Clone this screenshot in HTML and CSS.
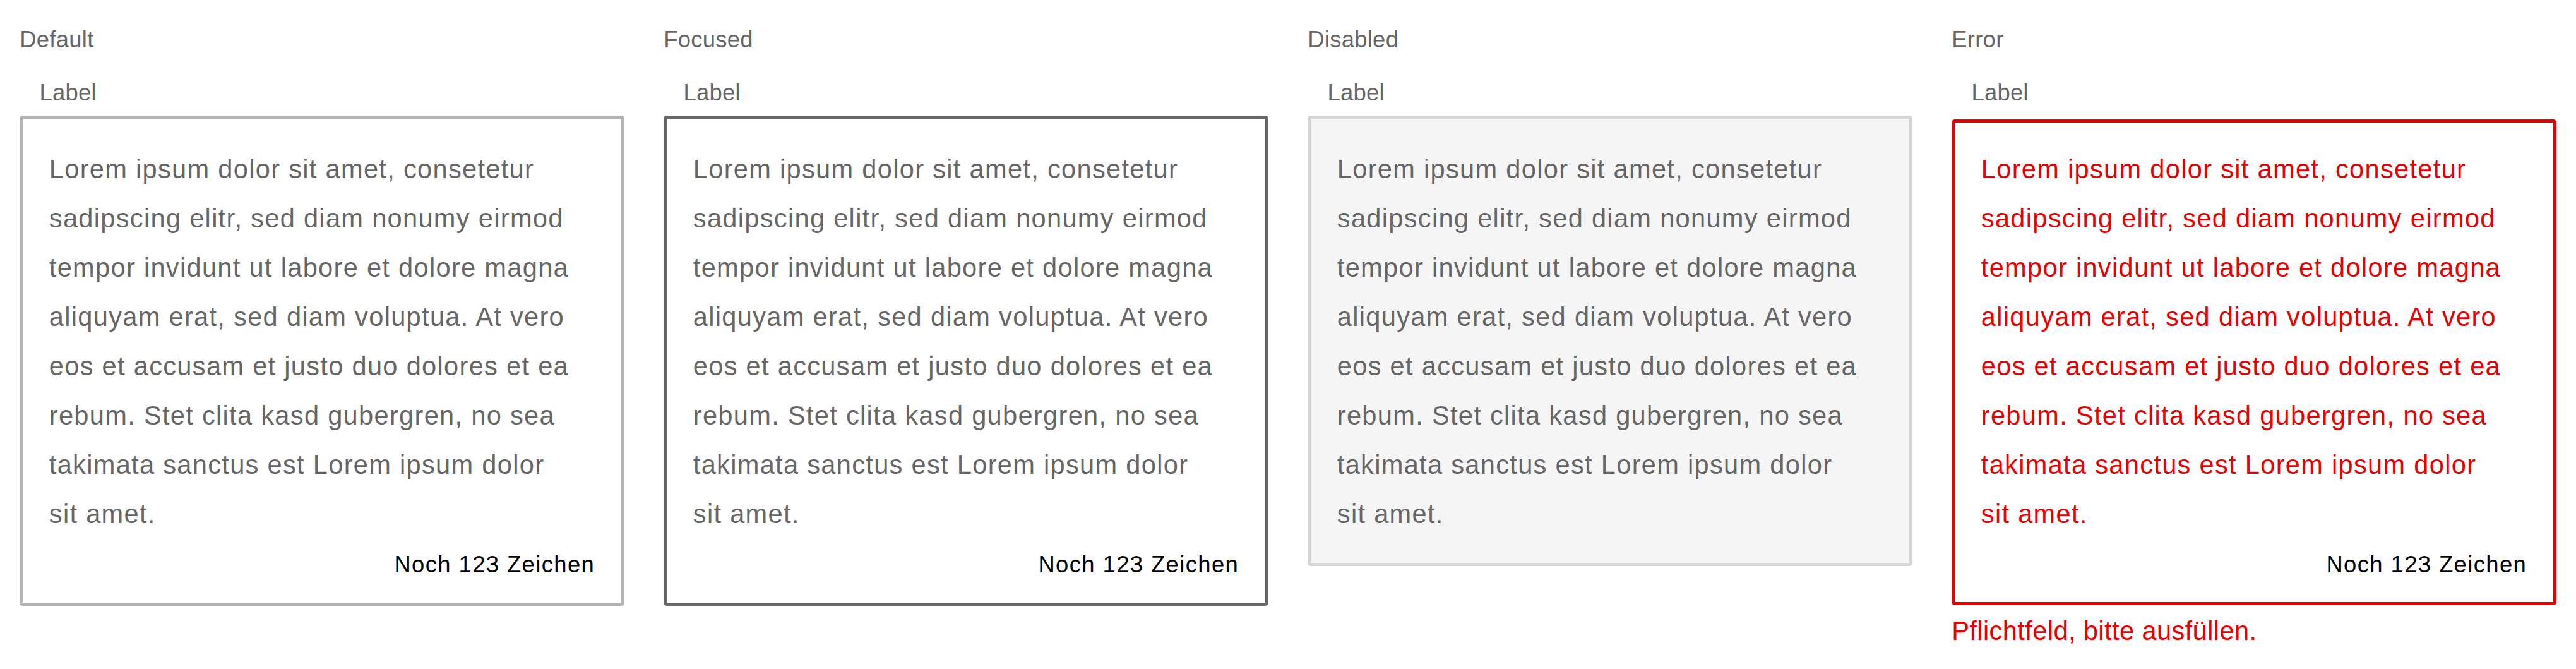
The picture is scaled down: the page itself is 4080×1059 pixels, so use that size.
FILE: index.html
```html
<!DOCTYPE html>
<html lang="de">
<head>
<meta charset="utf-8">
<title>Textarea states</title>
<link rel="stylesheet" href="styles.css">
</head>
<body>
<main class="states">
  <section class="state">
    <h2 class="state-title">Default</h2>
    <div class="field">
      <div class="field-label">Label</div>
      <div class="field-box">
        <p class="field-text">Lorem ipsum dolor sit amet, consetetur<br>sadipscing elitr, sed diam nonumy eirmod<br>tempor invidunt ut labore et dolore magna<br>aliquyam erat, sed diam voluptua. At vero<br>eos et accusam et justo duo dolores et ea<br>rebum. Stet clita kasd gubergren, no sea<br>takimata sanctus est Lorem ipsum dolor<br>sit amet.</p>
        <div class="field-counter">Noch 123 Zeichen</div>
      </div>
    </div>
  </section>
  <section class="state">
    <h2 class="state-title">Focused</h2>
    <div class="field">
      <div class="field-label">Label</div>
      <div class="field-box field-box--focused">
        <p class="field-text">Lorem ipsum dolor sit amet, consetetur<br>sadipscing elitr, sed diam nonumy eirmod<br>tempor invidunt ut labore et dolore magna<br>aliquyam erat, sed diam voluptua. At vero<br>eos et accusam et justo duo dolores et ea<br>rebum. Stet clita kasd gubergren, no sea<br>takimata sanctus est Lorem ipsum dolor<br>sit amet.</p>
        <div class="field-counter">Noch 123 Zeichen</div>
      </div>
    </div>
  </section>
  <section class="state">
    <h2 class="state-title">Disabled</h2>
    <div class="field">
      <div class="field-label">Label</div>
      <div class="field-box field-box--disabled">
        <p class="field-text">Lorem ipsum dolor sit amet, consetetur<br>sadipscing elitr, sed diam nonumy eirmod<br>tempor invidunt ut labore et dolore magna<br>aliquyam erat, sed diam voluptua. At vero<br>eos et accusam et justo duo dolores et ea<br>rebum. Stet clita kasd gubergren, no sea<br>takimata sanctus est Lorem ipsum dolor<br>sit amet.</p>
      </div>
    </div>
  </section>
  <section class="state">
    <h2 class="state-title">Error</h2>
    <div class="field">
      <div class="field-label">Label</div>
      <div class="field-box field-box--error">
        <p class="field-text field-text--error">Lorem ipsum dolor sit amet, consetetur<br>sadipscing elitr, sed diam nonumy eirmod<br>tempor invidunt ut labore et dolore magna<br>aliquyam erat, sed diam voluptua. At vero<br>eos et accusam et justo duo dolores et ea<br>rebum. Stet clita kasd gubergren, no sea<br>takimata sanctus est Lorem ipsum dolor<br>sit amet.</p>
        <div class="field-counter">Noch 123 Zeichen</div>
      </div>
      <div class="field-error">Pflichtfeld, bitte ausfüllen.</div>
    </div>
  </section>
</main>
</body>
</html>
```

FILE: styles.css
```css
* {
  box-sizing: border-box;
}

html, body {
  margin: 0;
  padding: 0;
  background: #ffffff;
}

body {
  font-family: "Liberation Sans", Arial, Helvetica, sans-serif;
  color: #666666;
}

.states {
  display: flex;
  gap: 62.4px;
  padding: 37px 31.2px 0 31.2px;
}

.state {
  flex: 1 1 0;
  min-width: 0;
}

.state-title {
  margin: 0;
  font-size: 36.4px;
  font-weight: normal;
  line-height: 52px;
  letter-spacing: 0.3px;
  color: #666666;
}

.field-label {
  margin-top: 32px;
  padding-left: 31.2px;
  font-size: 36.4px;
  line-height: 52px;
  letter-spacing: 0.3px;
  color: #666666;
}

.field-box {
  margin-top: 10px;
  border: 5.2px solid #b4b4b4;
  border-radius: 5px;
  background: #ffffff;
  padding: 41px 41.6px 34px 41.6px;
}

.field-box--focused {
  border-color: #666666;
}

.field-box--disabled {
  border-color: #d4d4d4;
  background: #f5f5f5;
  padding-bottom: 37.7px;
}

.field-box--error {
  border-color: #e80000;
  margin-top: 15.5px;
  padding-top: 35.5px;
  padding-bottom: 33.5px;
}

.field-text {
  margin: 0;
  font-size: 41.6px;
  line-height: 78px;
  letter-spacing: 1.3px;
  white-space: nowrap;
  color: #666666;
}

.field-text--error {
  color: #e80000;
}

.field-counter {
  margin-top: 14.7px;
  font-size: 36.4px;
  line-height: 52px;
  letter-spacing: 1.4px;
  color: #000000;
  text-align: right;
}

.field-error {
  margin-top: 15px;
  font-size: 41.6px;
  line-height: 52px;
  letter-spacing: 0.4px;
  color: #e80000;
}
```
